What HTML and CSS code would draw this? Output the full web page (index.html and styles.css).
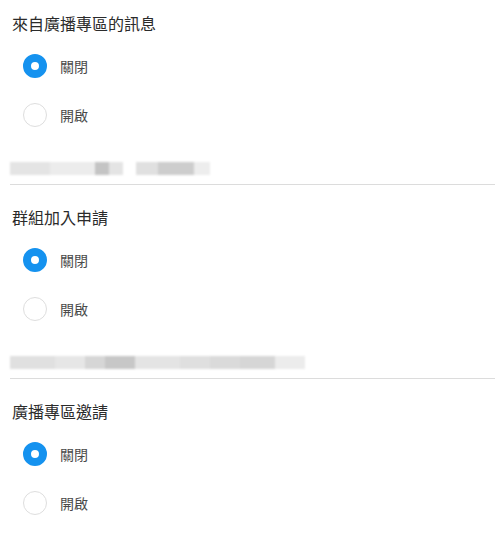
FILE: index.html
```html
<!DOCTYPE html>
<html lang="zh-Hant">
<head>
    <meta charset="UTF-8">
    <meta name="viewport" content="width=device-width, initial-scale=1.0">
    <title>通知設定</title>
    <link rel="stylesheet" href="styles.css">
</head>
<body>
    <div class="settings">
        <!-- 來自廣播專區的訊息 -->
        <div class="section">
            <div class="section-title">來自廣播專區的訊息</div>
            <div class="option"><span class="radio checked"></span><span class="label">關閉</span></div>
            <div class="option"><span class="radio"></span><span class="label">開啟</span></div>
            <div class="note">
                <span class="b b1"></span><span class="b b2"></span><span class="b b3"></span><span class="b b4"></span><span class="gap g1"></span><span class="b b5"></span><span class="b b6"></span><span class="b b7"></span>
            </div>
        </div>

        <!-- 群組加入申請 -->
        <div class="section">
            <div class="section-title">群組加入申請</div>
            <div class="option"><span class="radio checked"></span><span class="label">關閉</span></div>
            <div class="option"><span class="radio"></span><span class="label">開啟</span></div>
            <div class="note">
                <span class="b c1"></span><span class="b c2"></span><span class="b c3"></span><span class="b c4"></span><span class="b c5"></span><span class="b c6"></span><span class="b c7"></span><span class="b c8"></span><span class="b c9"></span>
            </div>
        </div>

        <!-- 廣播專區邀請 -->
        <div class="section last">
            <div class="section-title">廣播專區邀請</div>
            <div class="option"><span class="radio checked"></span><span class="label">關閉</span></div>
            <div class="option"><span class="radio"></span><span class="label">開啟</span></div>
        </div>
    </div>
</body>
</html>
```

FILE: styles.css
```css
body {
    margin: 0;
    background: #fff;
    font-family: "Noto Sans CJK TC", "Noto Sans", sans-serif;
    color: #333;
}
.settings {
    padding-top: 12px;
}
.section {
    margin-left: 10px;
    border-bottom: 1px solid #dcdcdc;
    padding-bottom: 9px;
    margin-bottom: 21px;
}
.section.last {
    border-bottom: none;
}
.section-title {
    font-size: 16px;
    line-height: 22px;
    padding-left: 2px;
    color: #2b2b2b;
    margin-bottom: 7px;
}
.option {
    display: flex;
    align-items: center;
    height: 49px;
    padding-left: 13px;
}
.radio {
    box-sizing: border-box;
    width: 24px;
    height: 24px;
    border-radius: 50%;
    border: 1.5px solid #dedede;
    background: #fff;
    flex-shrink: 0;
}
.radio.checked {
    border: 8px solid #1592ef;
}
.label {
    margin-left: 13px;
    font-size: 14px;
    color: #4a4a4a;
}
.note {
    display: flex;
    height: 13px;
    margin-top: 23px;
    filter: blur(1px);
}
.note .b {
    display: block;
    height: 100%;
    background: #ececec;
}
.note .gap {
    display: block;
}
.b1 { width: 40px; background: #e4e4e4 !important; }
.b2 { width: 45px; background: #ececec !important; }
.b3 { width: 14px; background: #c4c4c4 !important; }
.b4 { width: 14px; background: #e4e4e4 !important; }
.g1 { width: 13px; }
.b5 { width: 22px; background: #e0e0e0 !important; }
.b6 { width: 36px; background: #cdcdcd !important; }
.b7 { width: 16px; background: #ededed !important; }
.c1 { width: 45px; background: #e0e0e0 !important; }
.c2 { width: 30px; background: #e6e6e6 !important; }
.c3 { width: 20px; background: #d6d6d6 !important; }
.c4 { width: 30px; background: #c7c7c7 !important; }
.c5 { width: 45px; background: #e4e4e4 !important; }
.c6 { width: 30px; background: #dfdfdf !important; }
.c7 { width: 30px; background: #dadada !important; }
.c8 { width: 35px; background: #d6d6d6 !important; }
.c9 { width: 30px; background: #ececec !important; }
```
